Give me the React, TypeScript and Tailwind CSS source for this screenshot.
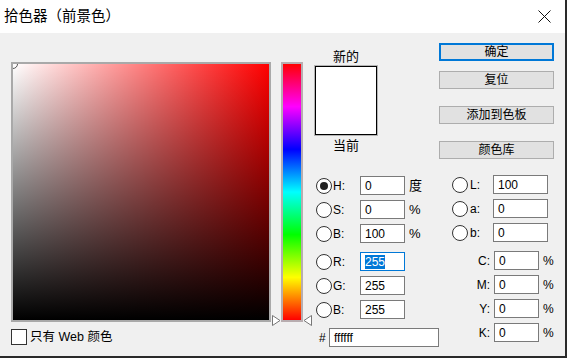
import React from "react";

const font = "font-['Liberation_Sans','Noto_Sans_CJK_SC',sans-serif]";

const Radio = ({ checked = false }: { checked?: boolean }) => (
  <span className="w-[16px] h-[16px] rounded-full border border-[#333] bg-white flex items-center justify-center shrink-0">
    {checked && <span className="w-[8px] h-[8px] rounded-full bg-[#222]" />}
  </span>
);

const Field = ({
  value,
  width = "w-[45px]",
  selected = false,
}: {
  value: string;
  width?: string;
  selected?: boolean;
}) => (
  <div
    className={`${width} h-[19px] bg-white border flex items-center pl-[4px] text-[12px] text-black ${
      selected ? "border-[#0078d7]" : "border-[#7a7a7a]"
    }`}
  >
    {selected ? <span className="bg-[#0078d7] text-white leading-[14px]">{value}</span> : value}
  </div>
);

const hsb = [
  { label: "H:", value: "0", unit: "度", checked: true },
  { label: "S:", value: "0", unit: "%" },
  { label: "B:", value: "100", unit: "%" },
];

const rgb = [
  { label: "R:", value: "255", selected: true },
  { label: "G:", value: "255" },
  { label: "B:", value: "255" },
];

const lab = [
  { label: "L:", value: "100" },
  { label: "a:", value: "0" },
  { label: "b:", value: "0" },
];

const cmyk = ["C:", "M:", "Y:", "K:"];

const Button = ({ children, primary = false }: { children: React.ReactNode; primary?: boolean }) => (
  <div
    className={`w-[115px] h-[18px] bg-[#e1e1e1] flex items-center justify-center text-[12px] text-black ${
      primary ? "border-2 border-[#0078d7]" : "border border-[#adadad]"
    }`}
  >
    {children}
  </div>
);

export default function App() {
  return (
    <div
      className={`${font} w-[567px] h-[358px] flex flex-col bg-[#f0f0f0] border-r-2 border-b-2 border-[#2a2a2a] overflow-hidden`}
    >
      {/* Title bar */}
      <div className="h-[33px] bg-white flex items-center justify-between pl-[4px] pr-[14px] shrink-0">
        <span className="text-[14.5px] text-black leading-none">拾色器（前景色）</span>
        <svg width="13" height="13" viewBox="0 0 13 13">
          <path d="M0.5 0.5 L12.5 12.5 M12.5 0.5 L0.5 12.5" stroke="#111" strokeWidth="1" />
        </svg>
      </div>

      {/* Body */}
      <div className="flex-1 flex pl-[11px]">
        {/* Colour field */}
        <div className="flex flex-col mt-[29px]">
          <div className="w-[260px] h-[260px] border-2 border-[#a9a9a9] relative overflow-hidden">
            <div className="absolute inset-0 bg-[linear-gradient(to_right,#ffffff,#ff0000)]" />
            <div className="absolute inset-0 bg-[linear-gradient(to_bottom,rgba(0,0,0,0),#000000)]" />
            <div className="absolute -left-[5px] -top-[5px] w-[10px] h-[10px] rounded-full border border-[#555]" />
          </div>
          <div className="flex items-center mt-[6px]">
            <span className="w-[16px] h-[16px] border border-[#333] bg-white" />
            <span className="ml-[3px] text-[12.5px] text-black">只有 Web 颜色</span>
          </div>
        </div>

        {/* Hue bar */}
        <div className="ml-[10px] mt-[29px] relative">
          <div className="w-[22px] h-[260px] border-2 border-[#b8adb0] bg-[linear-gradient(to_bottom,#ff0000,#ff00ff,#0000ff,#00ffff,#00ff00,#ffff00,#ff0000)]" />
          <svg className="absolute -left-[9px] top-[253px]" width="9" height="11" viewBox="0 0 9 11">
            <path d="M0.5 0.5 L8 5.5 L0.5 10.5 Z" fill="#fff" stroke="#777" />
          </svg>
          <svg className="absolute left-[22px] top-[253px]" width="9" height="11" viewBox="0 0 9 11">
            <path d="M8.5 0.5 L1 5.5 L8.5 10.5 Z" fill="#fff" stroke="#777" />
          </svg>
        </div>

        {/* Middle column */}
        <div className="ml-[12px] w-[124px] flex flex-col">
          <div className="w-[62px] mt-[16px] text-center text-[13px] leading-[16px] text-black">新的</div>
          <div className="w-[62px] h-[69px] mt-[1px] bg-white border border-black outline outline-1 outline-[#b4b4b4]" />
          <div className="w-[62px] mt-[3px] text-center text-[13px] leading-[16px] text-black">当前</div>

          <div className="flex flex-col gap-[5px] mt-[22px]">
            {hsb.map((r) => (
              <div key={r.label} className="flex items-center h-[19px]">
                <span className="ml-[1px]">
                  <Radio checked={r.checked} />
                </span>
                <span className="ml-[1px] w-[27px] text-[12px] text-black">{r.label}</span>
                <Field value={r.value} />
                <span className="ml-[4px] text-[13px] text-black">{r.unit}</span>
              </div>
            ))}
          </div>

          <div className="flex flex-col gap-[5px] mt-[9px]">
            {rgb.map((r) => (
              <div key={r.label} className="flex items-center h-[19px]">
                <span className="ml-[1px]">
                  <Radio />
                </span>
                <span className="ml-[1px] w-[27px] text-[12px] text-black">{r.label}</span>
                <Field value={r.value} selected={r.selected} />
              </div>
            ))}
          </div>

          <div className="flex items-center h-[19px] mt-[9px] pl-[4px]">
            <span className="w-[13px] text-[12px] text-black">#</span>
            <Field value="ffffff" width="w-[110px] shrink-0" />
          </div>
        </div>

        {/* Right column */}
        <div className="flex flex-col">
          <div className="mt-[10px]">
            <Button primary>确定</Button>
          </div>
          <div className="mt-[10px]">
            <Button>复位</Button>
          </div>
          <div className="mt-[17px]">
            <Button>添加到色板</Button>
          </div>
          <div className="mt-[17px]">
            <Button>颜色库</Button>
          </div>

          <div className="flex flex-col gap-[5px] mt-[16px]">
            {lab.map((r) => (
              <div key={r.label} className="flex items-center h-[19px]">
                <span className="ml-[13px]">
                  <Radio />
                </span>
                <span className="ml-[2px] w-[23px] text-[12px] text-black">{r.label}</span>
                <Field value={r.value} width="w-[55px]" />
              </div>
            ))}
          </div>

          <div className="flex flex-col gap-[5px] mt-[9px]">
            {cmyk.map((l) => (
              <div key={l} className="flex items-center h-[19px]">
                <span className="w-[51px] text-right text-[12px] text-black">{l}</span>
                <span className="ml-[4px]">
                  <Field value="0" />
                </span>
                <span className="ml-[4px] text-[12px] text-black">%</span>
              </div>
            ))}
          </div>
        </div>
      </div>
    </div>
  );
}
